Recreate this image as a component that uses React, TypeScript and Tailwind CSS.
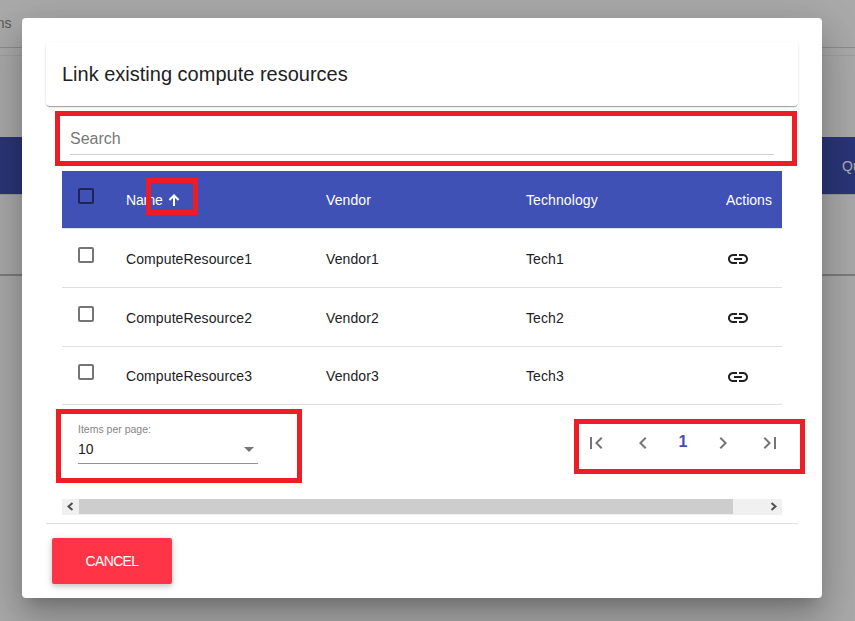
const rows = [
  { name: "ComputeResource1", vendor: "Vendor1", tech: "Tech1", size: "h-[59px]", box: "top-[-3px]", text: "pt-px" },
  { name: "ComputeResource2", vendor: "Vendor2", tech: "Tech2", size: "h-[59px]", box: "top-[-3px]", text: "pt-px" },
  { name: "ComputeResource3", vendor: "Vendor3", tech: "Tech3", size: "h-[58px]", box: "top-[-4px]", text: "pt-px" },
];

function Icon({ d, className }: { d: string; className: string }) {
  return (
    <svg viewBox="0 0 24 24" width="24" height="24" fill="currentColor" className={className}>
      <path d={d} />
    </svg>
  );
}

const LINK =
  "M3.9 12c0-1.71 1.39-3.1 3.1-3.1h4V7H7c-2.76 0-5 2.24-5 5s2.24 5 5 5h4v-1.9H7c-1.71 0-3.1-1.39-3.1-3.1zM8 13h8v-2H8v2zm9-6h-4v1.9h4c1.71 0 3.1 1.39 3.1 3.1s-1.39 3.1-3.1 3.1h-4V17h4c2.76 0 5-2.24 5-5s-2.24-5-5-5z";

function Checkbox({ className }: { className: string }) {
  return <span className={`block h-4 w-4 shrink-0 rounded-[2px] border-2 ${className}`} />;
}

function Backdrop() {
  return (
    <div className="flex h-full flex-col bg-[#aaaaaa] text-[#58585a]">
      <div className="flex h-12 items-center border-b border-[#8d8d8d]">
        <span className="-ml-[11px] -mt-px text-sm">ons</span>
      </div>
      <div className="h-[7px]" />
      <div className="h-[82px] border-t border-[#a0a0a0]" />
      <div className="flex h-[57px] items-center bg-[#2b3679] pl-[842px] text-sm tracking-[0.1px] text-[#b0b0b4]">Quantity</div>
      <div className="h-[82px] border-t border-b-2 border-t-[#989898] border-b-[#7d7d7d]" />
    </div>
  );
}

export default function App() {
  return (
    <div className="relative h-[621px] w-[855px] overflow-hidden font-['Liberation_Sans',Arial,sans-serif]">
      <Backdrop />
      <div className="absolute left-[22px] top-[18px] flex h-[580px] w-[800px] flex-col rounded bg-white px-6 pt-6 text-[#212124] shadow-[0_11px_15px_-7px_rgba(0,0,0,0.2),0_24px_38px_3px_rgba(0,0,0,0.14),0_9px_46px_8px_rgba(0,0,0,0.12)]">
        <div className="flex h-16 shrink-0 items-center rounded px-4 text-xl shadow-[0_2px_1px_-1px_rgba(0,0,0,0.2),0_1px_1px_0_rgba(0,0,0,0.14),0_1px_3px_0_rgba(0,0,0,0.12)]">
          Link existing compute resources
        </div>
        <div className="mx-6 flex h-[49px] shrink-0 items-end border-b border-[#cdd0d6] pb-[5px] text-base leading-[20px] text-[#777777]">
          Search
        </div>
        <div className="mx-4 mt-4 flex flex-col text-sm tracking-[0.1px]">
          <div className="flex h-[58px] items-center border-b border-[#dee2e6] bg-[#3f51b5] pl-4 text-white">
            <Checkbox className="relative top-[-4px] border-[#1d2554]" />
            <div className="ml-8 flex w-[200px] items-center">
              <span className="w-[36px] tracking-[-0.2px]">Name</span>
              <svg width="12" height="12" viewBox="0 0 12 12" className="ml-[6px]" fill="none" stroke="white" strokeWidth="2">
                <path d="M6 12V1.5M1.4 6L6 1.5L10.6 6" />
              </svg>
            </div>
            <div className="w-[200px]">Vendor</div>
            <div className="w-[200px]">Technology</div>
            <div className="tracking-normal">Actions</div>
          </div>
          {rows.map((r) => (
            <div key={r.name} className={`flex items-center border-b border-[#dddfe5] pl-4 ${r.size}`}>
              <Checkbox className={`relative border-[#757575] ${r.box}`} />
              <div className={`ml-8 w-[200px] ${r.text}`}>{r.name}</div>
              <div className={`w-[200px] ${r.text}`}>{r.vendor}</div>
              <div className={`w-[200px] ${r.text}`}>{r.tech}</div>
              <Icon d={LINK} className="mt-[2px]" />
            </div>
          ))}
        </div>
        <div className="mx-4 flex h-[94px] shrink-0 justify-between pl-4">
          <div className="flex h-[59px] w-[180px] flex-col border-b border-[#929292] pt-[18px]">
            <span className="text-[10.5px] leading-[12px] text-[#858585]">Items per page:</span>
            <div className="mt-[6px] flex items-center justify-between pr-1 text-sm leading-4">
              10
              <span className="h-0 w-0 border-x-[5px] border-t-[5px] border-x-transparent border-t-[#757575]" />
            </div>
          </div>
          <div className="flex h-[76px] w-[198px] items-center text-[#757575]">
            <Icon className="shrink-0" d="M18.41 16.59L13.82 12l4.59-4.59L17 6l-6 6 6 6zM6 6h2v12H6z" />
            <Icon className="ml-[23px] shrink-0" d="M15.41 7.41L14 6l-6 6 6 6 1.41-1.41L10.83 12z" />
            <span className="-mt-[2px] w-[56px] text-center text-base font-bold text-[#3f51b5]">1</span>
            <Icon className="shrink-0" d="M10 6L8.59 7.41 13.17 12l-4.58 4.59L10 18l6-6z" />
            <Icon className="ml-[23px] shrink-0" d="M5.59 7.41L10.18 12l-4.59 4.59L7 18l6-6-6-6zM16 6h2v12h-2z" />
          </div>
        </div>
        <div className="mx-4 flex h-4 shrink-0 justify-between bg-[#f0f0f0] pb-px text-[#505050]">
          <svg width="17" height="15" fill="none" stroke="currentColor" strokeWidth="2">
            <path d="M10.5 4L6.5 7.5L10.5 11" />
          </svg>
          <div className="mr-8 grow bg-[#cdcdcd]" />
          <svg width="17" height="15" fill="none" stroke="currentColor" strokeWidth="2">
            <path d="M6.5 4L10.5 7.5L6.5 11" />
          </svg>
        </div>
        <div className="mt-2 h-px shrink-0 bg-[#e0e0e0]" />
        <button className="ml-[6px] mt-[14px] h-[46px] w-[120px] shrink-0 rounded-[2px] bg-[#ff3547] text-[14px] tracking-[-0.65px] text-white shadow-[0_2px_5px_0_rgba(0,0,0,0.16),0_2px_10px_0_rgba(0,0,0,0.12)]">
          CANCEL
        </button>
      </div>
      <div className="absolute left-[55px] top-[111px] h-[55px] w-[742px] border-5 border-[#ee1c24]" />
      <div className="absolute left-[146px] top-[178px] h-[37px] w-[52px] border-5 border-[#ee1c24]" />
      <div className="absolute left-[56px] top-[409px] h-[74px] w-[246px] border-5 border-[#ee1c24]" />
      <div className="absolute left-[574px] top-[419px] h-[55px] w-[231px] border-5 border-[#ee1c24]" />
    </div>
  );
}
